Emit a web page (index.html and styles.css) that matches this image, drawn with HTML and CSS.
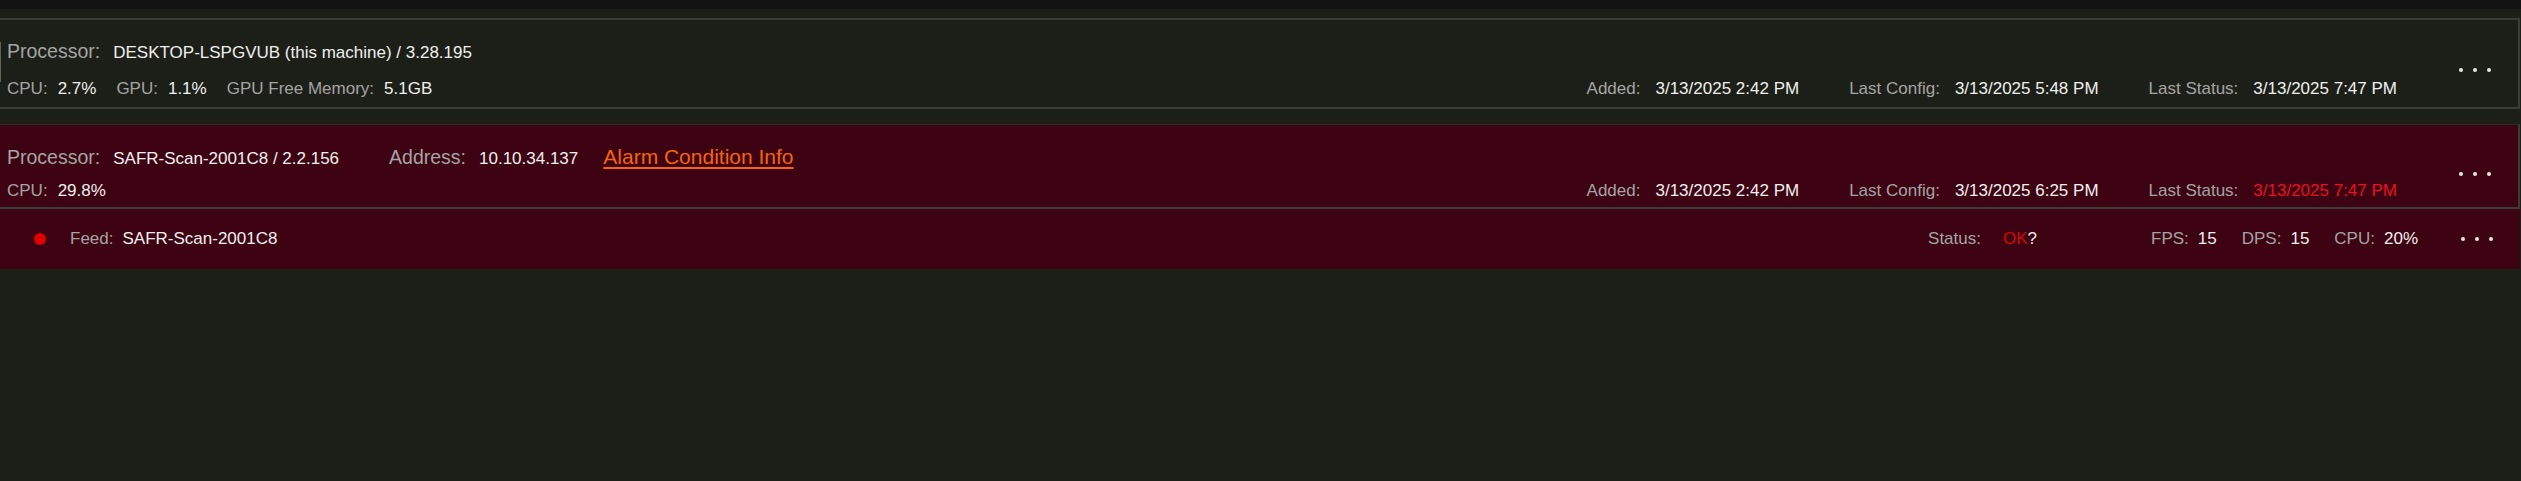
FILE: index.html
```html
<!DOCTYPE html>
<html lang="en">
<head>
<meta charset="utf-8">
<title>Processors</title>
<link rel="stylesheet" href="styles.css">
</head>
<body>
<div class="topbar"></div>
<main class="list">
  <section class="card card-ok">
    <span class="focus-mark"></span>
    <div class="card-body">
      <div class="row row-head">
        <span class="pair pair-head"><span class="lbl lbl-lg">Processor:</span><span class="val">DESKTOP-LSPGVUB (this machine) / 3.28.195</span></span>
      </div>
      <div class="row row-stats">
        <div class="pairs">
          <span class="pair"><span class="lbl">CPU:</span><span class="val">2.7%</span></span>
          <span class="pair"><span class="lbl">GPU:</span><span class="val">1.1%</span></span>
          <span class="pair"><span class="lbl">GPU Free Memory:</span><span class="val">5.1GB</span></span>
        </div>
        <div class="pairs pairs-right">
          <span class="pair"><span class="lbl">Added:</span><span class="val">3/13/2025 2:42 PM</span></span>
          <span class="pair"><span class="lbl">Last Config:</span><span class="val">3/13/2025 5:48 PM</span></span>
          <span class="pair"><span class="lbl">Last Status:</span><span class="val">3/13/2025 7:47 PM</span></span>
        </div>
      </div>
    </div>
    <div class="more"><i></i><i></i><i></i></div>
  </section>

  <div class="alarm">
    <section class="card card-alarm">
      <div class="card-body">
        <div class="row row-head">
          <span class="pair pair-head"><span class="lbl lbl-lg">Processor:</span><span class="val">SAFR-Scan-2001C8 / 2.2.156</span></span>
          <span class="pair pair-head pair-address"><span class="lbl lbl-lg">Address:</span><span class="val">10.10.34.137</span></span>
          <a class="alarm-link" href="#">Alarm Condition Info</a>
        </div>
        <div class="row row-stats">
          <div class="pairs">
            <span class="pair"><span class="lbl">CPU:</span><span class="val">29.8%</span></span>
          </div>
          <div class="pairs pairs-right">
            <span class="pair"><span class="lbl">Added:</span><span class="val">3/13/2025 2:42 PM</span></span>
            <span class="pair"><span class="lbl">Last Config:</span><span class="val">3/13/2025 6:25 PM</span></span>
            <span class="pair"><span class="lbl">Last Status:</span><span class="val val-bad">3/13/2025 7:47 PM</span></span>
          </div>
        </div>
      </div>
      <div class="more"><i></i><i></i><i></i></div>
    </section>

    <div class="feed">
      <span class="led"></span>
      <span class="pair"><span class="lbl">Feed:</span><span class="val">SAFR-Scan-2001C8</span></span>
      <span class="pair feed-status"><span class="lbl">Status:</span><span class="val"><span class="ok-red">OK</span>?</span></span>
      <div class="pairs feed-metrics">
        <span class="pair"><span class="lbl">FPS:</span><span class="val">15</span></span>
        <span class="pair"><span class="lbl">DPS:</span><span class="val">15</span></span>
        <span class="pair"><span class="lbl">CPU:</span><span class="val">20%</span></span>
      </div>
      <div class="more more-feed"><i></i><i></i><i></i></div>
    </div>
  </div>
</main>
</body>
</html>
```

FILE: styles.css
```css
* { box-sizing: border-box; }

html, body { margin: 0; }

body {
  width: 2521px;
  height: 481px;
  overflow: hidden;
  background: #1c1f17;
  color: #eeeeee;
  font-family: "Liberation Sans", Arial, sans-serif;
}

.topbar {
  height: 9px;
  background: #131313;
}

.list {
  padding: 9px 1px 0 0;
}

.card {
  position: relative;
  display: flex;
  align-items: center;
  border: 2px solid #393d33;
  border-left: 0;
}

.card-ok {
  padding: 18px 0 6px;
}

.focus-mark {
  position: absolute;
  left: 0;
  top: 22px;
  width: 1px;
  height: 40px;
  background: #5f6158;
}

.card-body {
  flex: 1;
  min-width: 0;
  display: flex;
  flex-direction: column;
}

.row {
  display: flex;
  align-items: baseline;
  padding-left: 7px;
}

.row-head {
  height: 26px;
  line-height: 26px;
}

.row-stats {
  height: 24px;
  line-height: 24px;
  margin-top: 13px;
  justify-content: space-between;
}

.pairs {
  display: flex;
  align-items: baseline;
  gap: 20px;
}

.pairs-right {
  gap: 50px;
}

.pair {
  display: flex;
  align-items: baseline;
  gap: 10px;
  white-space: nowrap;
}

.pairs-right .pair {
  gap: 15px;
}

.pair-head {
  gap: 13px;
}

.pair-address {
  margin-left: 50px;
}

.lbl {
  color: #a4a4a4;
  font-size: 17px;
}

.lbl-lg {
  font-size: 19.5px;
}

.val {
  color: #efefef;
  font-size: 17px;
}

.val-bad {
  color: #e81123;
}

.ok-red {
  color: #d20a0a;
}

.alarm-link {
  margin-left: 25px;
  color: #f7630c;
  font-size: 21px;
  text-decoration: underline;
  text-underline-offset: 3px;
}

.more {
  display: flex;
  align-items: center;
  gap: 10px;
  margin-left: 62px;
  padding-right: 27px;
}

.more i {
  display: block;
  width: 4px;
  height: 4px;
  border-radius: 50%;
  background: #e6e6e6;
}

.alarm {
  margin-top: 15px;
  background: #3d0312;
}

.card-alarm {
  border-top: 1px solid #2d2b25;
  padding: 19px 0 4px;
}

.card-alarm .row-stats {
  margin-top: 9px;
}

.feed {
  height: 60px;
  display: flex;
  align-items: center;
  padding: 0 27px 0 34px;
  line-height: 24px;
}

.led {
  width: 12px;
  height: 12px;
  border-radius: 50%;
  background: #e00000;
  margin-right: 24px;
}

.feed .pair {
  gap: 9px;
}

.feed-status {
  margin-left: auto;
}

.feed .feed-status {
  gap: 22px;
}

.feed-metrics {
  margin-left: 114px;
  gap: 25px;
}

.more-feed {
  margin-left: 43px;
  padding-right: 0;
}
```
